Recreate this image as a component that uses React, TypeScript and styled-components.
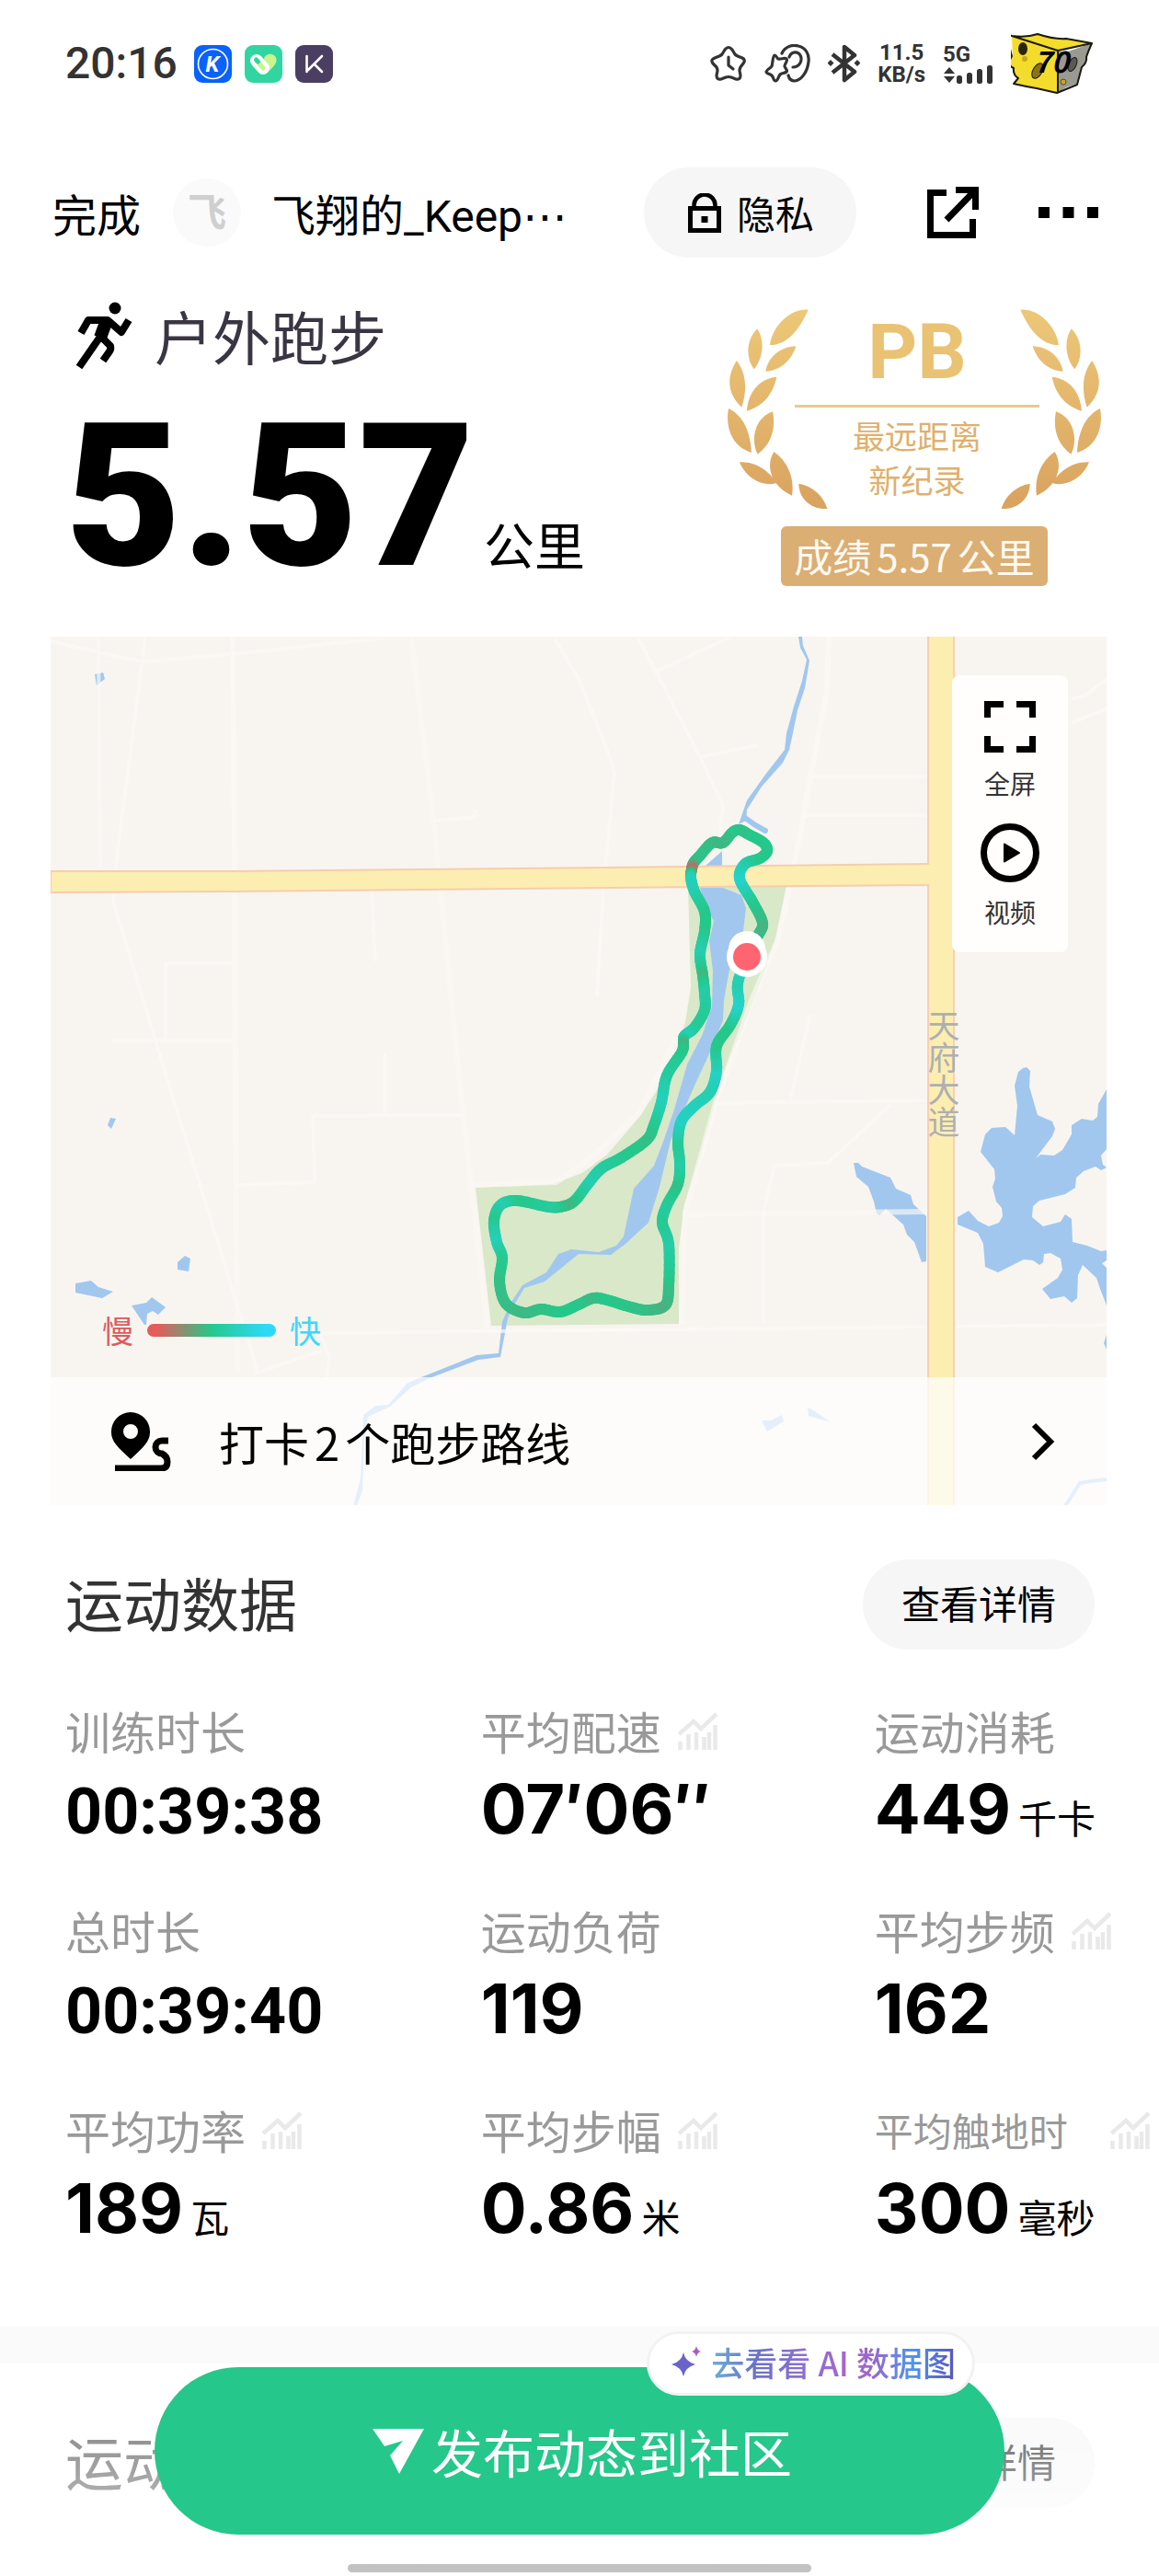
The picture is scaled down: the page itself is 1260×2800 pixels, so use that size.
import React from "react";
import styled, { createGlobalStyle, css } from "styled-components";

const CJK = `"Noto Sans CJK SC", sans-serif`;
const NUM = `Inter, "Noto Sans CJK SC", sans-serif`;
const MIXED = `Roboto, "Noto Sans CJK SC", sans-serif`;

const GlobalStyle = createGlobalStyle`
  *, *::before, *::after { box-sizing: border-box; }
  body { margin: 0; background: #fff; color: #000; font-family: ${CJK}; }
  h1, h2, p, dl, dt, dd { margin: 0; font-weight: 400; }
  button { font-family: inherit; border: 0; padding: 0; background: none; color: inherit; cursor: pointer; }
  svg { display: block; flex: none; }
`;

const Page = styled.div`
  min-height: 100vh;
  display: flex;
  flex-direction: column;
`;

/* ---------- status bar ---------- */

const StatusBar = styled.div`
  height: 138px;
  padding: 0 71px;
  display: flex;
  align-items: center;
  justify-content: space-between;
  color: #333;
`;

const StatusGroup = styled.div<{ $gap: number }>`
  display: flex;
  align-items: center;
  gap: ${(p) => p.$gap}px;
`;

const Clock = styled.time`
  font-family: ${MIXED};
  font-size: 48px;
  line-height: 60px;
  font-weight: 500;
  margin-right: 4px;
`;

const TinyStack = styled.div<{ $align: string }>`
  display: flex;
  flex-direction: column;
  align-items: ${(p) => p.$align};
  font-family: ${MIXED};
  font-size: 24px;
  font-weight: 700;
  line-height: 24px;
`;

/* ---------- top navigation ---------- */

const Nav = styled.header`
  height: 186px;
  padding: 0 66px 0 57px;
  display: flex;
  align-items: center;
  font-size: 48px;
  line-height: 64px;
`;

const TextButton = styled.button`
  font-size: 48px;
  line-height: 64px;
`;

const Avatar = styled.span`
  flex: none;
  width: 74px;
  height: 74px;
  margin: 0 33px 0 35px;
  border-radius: 50%;
  background: #fafafa;
  color: #cfcfcf;
  font-size: 42px;
  font-weight: 700;
  line-height: 68px;
  text-align: center;
`;

const UserName = styled.span`
  flex: 1;
  min-width: 0;
  white-space: nowrap;
`;

const LatinName = styled.span`
  font-family: ${MIXED};
  line-height: 1;
`;

const MoreDots = styled.span`
  font-family: "DejaVu Sans", sans-serif;
  line-height: 1;
`;

const Pill = styled.button`
  flex: none;
  height: 98px;
  padding: 0 42px 4px;
  display: flex;
  align-items: center;
  gap: 17px;
  border-radius: 49px;
  background: #f6f6f6;
  font-size: 42px;
  line-height: 60px;
`;

const PrivacyPill = styled(Pill)`
  padding: 0 46px 0 48px;
`;

const IconButton = styled.button<{ $ml: number }>`
  margin-left: ${(p) => p.$ml}px;
`;

/* ---------- hero ---------- */

const Hero = styled.section`
  height: 368px;
  padding: 0 63px 0 71px;
  display: flex;
  justify-content: space-between;
`;

const SportName = styled.h1`
  height: 80px;
  display: flex;
  align-items: center;
  gap: 24px;
  padding-left: 9px;
  font-size: 63px;
  line-height: 80px;
  color: #3a3542;
`;

const Distance = styled.p`
  font-family: ${MIXED};
  font-weight: 900;
  font-size: 218px;
  line-height: 272px;
  white-space: nowrap;
`;

const DistanceUnit = styled.span`
  margin-left: 10px;
  font-family: ${CJK};
  font-weight: 400;
  font-size: 55px;
  line-height: 1;
`;

const Badge = styled.div`
  padding-top: 12px;
  display: flex;
  flex-direction: column;
  align-items: center;
`;

const Wreath = styled.div`
  display: grid;
  justify-items: center;
  & > * { grid-area: 1 / 1; }
`;

const WreathBody = styled.div`
  width: 272px;
  padding-left: 6px;
  display: flex;
  flex-direction: column;
  align-items: stretch;
  text-align: center;
  color: #e0b06c;
  font-size: 35px;
  line-height: 48px;
`;

const RecordMark = styled.strong`
  font-family: Roboto, sans-serif;
  font-weight: 700;
  font-size: 84px;
  line-height: 94px;
  color: #eac273;
`;

const RecordRule = styled.hr`
  width: 100%;
  height: 3px;
  margin: 10px 0 6px;
  border: 0;
  background: #e6cb8c;
`;

const RecordLabel = styled.p`
  height: 65px;
  margin-top: 18px;
  padding: 0 14px;
  border-radius: 6px;
  background: #dbae74;
  color: #fffaf0;
  font-size: 42px;
  line-height: 64px;
`;

const Inset = styled.span`
  margin: 0 6px;
`;

/* ---------- map ---------- */

const MapCard = styled.section`
  position: relative;
  margin: 0 57px 0 55px;
  overflow: hidden;
`;

const MapSvg = styled.svg`
  width: 100%;
  height: 944px;
`;

const RoadName = styled.text`
  writing-mode: vertical-rl;
  font-family: ${CJK};
  font-size: 35px;
  fill: #adb0b2;
`;

const MapTools = styled.div`
  position: absolute;
  top: 42px;
  right: 42px;
  width: 126px;
  padding: 27px 0 24px;
  display: flex;
  flex-direction: column;
  gap: 24px;
  border-radius: 8px;
  background: #fffefc;
`;

const MapTool = styled.button`
  display: flex;
  flex-direction: column;
  align-items: center;
  gap: 12px;
  font-size: 28px;
  line-height: 40px;
  color: #333;
`;

const Legend = styled.div`
  position: absolute;
  left: 56px;
  bottom: 166px;
  display: flex;
  align-items: center;
  gap: 15px;
  font-size: 34px;
  line-height: 48px;
`;

const LegendWord = styled.span<{ $color: string }>`
  color: ${(p) => p.$color};
`;

const LegendBar = styled.span`
  width: 140px;
  height: 14px;
  border-radius: 7px;
  background: linear-gradient(90deg, #e35d5b 8%, #25c88b 50%, #2ed9f7 92%);
`;

const RouteBar = styled.button`
  position: absolute;
  left: 0;
  right: 0;
  bottom: 0;
  height: 139px;
  padding: 0 56px 0 65px;
  display: flex;
  align-items: center;
  background: rgba(255, 255, 255, 0.72);
  font-size: 49px;
  line-height: 64px;
  text-align: left;
`;

const RouteText = styled.span`
  flex: 1;
  margin-left: 52px;
`;

/* ---------- data section ---------- */

const Section = styled.section`
  padding: 59px 70px 74px 71px;
`;

const SectionHead = styled.div`
  display: flex;
  align-items: center;
  justify-content: space-between;
`;

const SectionTitle = styled.h2`
  padding-bottom: 6px;
  font-size: 63px;
  line-height: 84px;
  color: #333;
`;

const Stats = styled.dl`
  margin: 58px -70px 12px 0;
  display: grid;
  grid-template-columns: 38fr 36fr 26fr;
  row-gap: 60px;
`;

const StatLabel = styled.dt<{ $compact?: boolean }>`
  height: 60px;
  display: flex;
  align-items: center;
  gap: 18px;
  font-size: 49px;
  line-height: 60px;
  white-space: nowrap;
  color: #999;
  ${(p) =>
    p.$compact &&
    css`
      font-size: 42px;
      gap: 46px;
    `}
`;

const StatValue = styled.dd`
  height: 84px;
  margin-top: 13px;
  font-family: ${NUM};
  font-weight: 700;
  font-size: 74px;
  line-height: 84px;
  white-space: nowrap;
`;

const LongValue = styled.span`
  font-family: Roboto, sans-serif;
  font-size: 70px;
  line-height: 1;
`;

const Unit = styled.span`
  margin-left: 8px;
  font-family: ${CJK};
  font-weight: 400;
  font-size: 42px;
  line-height: 1;
`;

const Divider = styled.div`
  height: 41px;
  background: #fafafa;
`;

/* ---------- bottom dock ---------- */

const Dock = styled.footer`
  position: fixed;
  left: 0;
  right: 0;
  bottom: 0;
  padding: 0 168px 4px;
  display: flex;
  flex-direction: column;
  align-items: center;
  background: linear-gradient(rgba(255, 255, 255, 0.3), rgba(255, 255, 255, 0.8));
`;

const PublishWrap = styled.div`
  position: relative;
  width: 100%;
`;

const PublishButton = styled.button`
  width: 100%;
  height: 182px;
  padding: 0;
  display: flex;
  align-items: center;
  justify-content: center;
  gap: 8px;
  border-radius: 91px;
  background: #25c78b;
  color: #fff;
  font-size: 56px;
  line-height: 80px;
  padding-left: 6px;
`;

const AiChip = styled.button`
  position: absolute;
  top: -39px;
  right: 32px;
  height: 70px;
  padding: 0 18px 4px 24px;
  display: flex;
  align-items: center;
  gap: 11px;
  border: 3px solid #f2f2f2;
  border-radius: 35px;
  background: #fff;
  font-size: 36px;
  line-height: 48px;
  font-weight: 500;
`;

const AiText = styled.span`
  background: linear-gradient(90deg, #6bb0d6, #6a72c8 18%, #8d6fd0 38%, #a468cc 55%, #9a66cc 66%, #4f95ee 82%, #5a55bd);
  background-clip: text;
  -webkit-background-clip: text;
  color: transparent;
`;

const HomeIndicator = styled.span`
  width: 504px;
  height: 9px;
  margin-top: 32px;
  border-radius: 5px;
  background: #c2c2c2;
`;

/* ---------- icons ---------- */

const AppIconBlue = () => (
  <svg width="41" height="41" viewBox="0 0 41 41">
    <rect width="41" height="41" rx="9" fill="#0a62fb" />
    <circle cx="20.500" cy="20.500" r="16" fill="none" stroke="#fff" strokeWidth="1.600" />
    <text x="20" y="29" fontSize="24" fontWeight="700" fontStyle="italic" fill="#fff" textAnchor="middle" fontFamily="Roboto, sans-serif">K</text>
  </svg>
);

const AppIconHeart = () => (
  <svg width="41" height="41" viewBox="0 0 41 41">
    <rect width="41" height="41" rx="9" fill="#31d5a2" />
    <path d="M21 15c1-5 8-7 12-3 4 5 0 11-9 18z" fill="#c9f58e" />
    <path d="M13 17l7 8" stroke="#fff" strokeWidth="14" strokeLinecap="round" />
    <path d="M13 17l7 8" stroke="#c9f58e" strokeWidth="5" strokeLinecap="round" />
    <path d="M12.500 16l2 2" stroke="#31d5a2" strokeWidth="5" strokeLinecap="round" />
  </svg>
);

const AppIconKeep = () => (
  <svg width="41" height="41" viewBox="0 0 41 41">
    <rect width="41" height="41" rx="9" fill="#4a3f62" />
    <path d="M12.500 12v17M29 12L14 27M21 21l8 8" stroke="#fff" strokeWidth="2.600" fill="none" strokeLinecap="round" />
  </svg>
);

const StarClock = () => (
  <svg width="40" height="40" viewBox="0 0 40 40" fill="none" stroke="#333" strokeWidth="3.200" strokeLinejoin="round" strokeLinecap="round">
    <path d="M16 5q4-5 8 0l3 5q1 1 3 2l5 2q4 2 1 6l-3 4q-1 2-1 4l1 5q0 5-5 4l-5-2q-3-1-6 0l-5 2q-5 1-5-4l1-5q0-2-1-4l-4-4q-3-4 2-6l5-2q2-1 3-2z" />
    <path d="M20 13v9l5 4" />
  </svg>
);

const StarEar = () => (
  <svg width="50" height="42" viewBox="0 0 50 42" fill="none" stroke="#333" strokeWidth="3.200" strokeLinejoin="round" strokeLinecap="round">
    <path d="M19 10C22 3 30 0 37 2c8 2 12 9 11 17-1 10-7 20-15 21-4 0-6-2-7-6" />
    <path d="M27 14c2-6 9-7 12-2 3 6-1 13-8 13" />
    <path d="M11 12c2 0 3 4 4 4 3 1 7-2 9 0s-2 5-2 8c0 2 4 4 2 6s-5 1-7 3-2 7-5 7c-2 0-2-4-4-6s-6-2-6-4c1-3 5-4 6-6s1-12 3-12z" fill="#fff" />
  </svg>
);

const BluetoothIcon = () => (
  <svg width="35" height="42" viewBox="0 0 35 42">
    <path d="M5 11l24 19-11 9V3l11 9L5 31" fill="none" stroke="#333" strokeWidth="4.500" strokeLinejoin="round" />
    <path d="M3 17l3.500 3.500L3 24-.5 20.500zM32 17l3.500 3.500L32 24l-3.500-3.500z" fill="#333" />
  </svg>
);

const SignalBars = () => (
  <svg width="55" height="20" viewBox="0 0 55 20" fill="#333">
    <path d="M7 2l6 7H1zM7 19l6-7H1z" />
    <rect x="15" y="11" width="6" height="9" rx="2.500" />
    <rect x="26" y="8" width="6" height="12" rx="2.500" />
    <rect x="37" y="4" width="6" height="16" rx="2.500" />
    <rect x="48" y="0" width="6" height="20" rx="2.500" />
  </svg>
);

const CheeseBattery = () => (
  <svg width="90" height="66" viewBox="0 0 90 66">
    <path d="M62 20L88 11q-4 10-6 15 1 6-5 11l-5 18-12 4-10 6V20z" fill="#9b9a92" />
    <path d="M1 3q16 2 28-2 18 6 31 5l28 5-37 8v46l-22-5q-12-2-25-5l5-6q-6-4-5-11-8-3-2-14z" fill="#f3dc2c" />
    <path d="M1 3q16 2 28-2 18 6 31 5l28 5q-4 9-6 15 1 6-5 11l-5 19-22 9-22-5q-12-2-25-5l5-6q-6-4-5-11-8-3-2-13-3-10-4-24zM1 3l50 16v46M51 19l37-8" fill="none" stroke="#1b1a12" strokeWidth="2" strokeLinejoin="round" />
    <ellipse cx="13" cy="17" rx="5" ry="7" fill="#2a2410" />
    <circle cx="15" cy="28" r="3" fill="#c7a91a" />
    <ellipse cx="29" cy="41" rx="5" ry="9" fill="#8a7415" stroke="#1b1a12" transform="rotate(30 29 41)" />
    <ellipse cx="67" cy="34" rx="4" ry="8" fill="#5b5a52" stroke="#1b1a12" transform="rotate(25 67 34)" />
    <circle cx="57" cy="53" r="3" fill="#c7a91a" stroke="#5d5010" />
    <text x="44" y="43" fontSize="32" fontWeight="700" fontStyle="italic" fill="#000" textAnchor="middle" fontFamily="Noto Sans CJK SC, sans-serif">70</text>
  </svg>
);

const LockIcon = () => (
  <svg width="36" height="43" viewBox="0 0 36 43" fill="none" stroke="#000">
    <path d="M6.500 17v-4a11.500 11.500 0 0 1 23 0v4" strokeWidth="4.500" />
    <rect x="2.500" y="16.500" width="31" height="24" strokeWidth="5" />
    <rect x="14.500" y="25" width="7" height="7" fill="#000" stroke="none" />
  </svg>
);

const ShareIcon = () => (
  <svg width="56" height="57" viewBox="0 0 56 57" fill="none" stroke="#000" strokeWidth="7">
    <path d="M21 6.500H3.500v46h46V35" />
    <path d="M31 3.500h21.500V25M52 4L21 36" />
  </svg>
);

const MoreIcon = () => (
  <svg width="65" height="12" viewBox="0 0 65 12">
    <path d="M0 0h12v12H0zM26.500 0h12v12h-12zM53 0h12v12H53z" />
  </svg>
);

const RunnerIcon = () => (
  <svg width="64" height="76" viewBox="0 0 64 76" fill="none" stroke="#000" strokeWidth="8" strokeLinejoin="round">
    <circle cx="45" cy="9" r="6.500" fill="#000" stroke="none" />
    <path d="M8 36l8-14h21l15 13 8-13" />
    <path d="M36 22l-7 19" strokeWidth="14" />
    <path d="M31 37L6 73" />
    <path d="M30 40l10 10q1 3-1 6l-7 10" />
  </svg>
);

const LEAVES =
  "M356 80C300 75 240 130 231 195C285 195 325 150 356 80zM190 142C155 175 150 235 179 274C205 245 218 185 190 142zM316 199C265 200 225 235 217 281C260 280 300 250 316 199zM122 246C88 300 92 355 139 398C157 345 155 285 122 246zM253 299C195 305 160 350 156 410C205 395 240 360 253 299zM96 402C85 460 105 525 171 546C168 480 145 425 96 402zM240 412C185 430 165 500 191 551C240 515 250 460 240 412zM244 543C215 590 235 655 303 686C312 630 290 575 244 543zM132 577C150 625 205 660 253 645C225 600 180 575 132 577zM325 647C325 695 365 732 418 729C405 685 370 655 325 647z";

const Laurels = () => (
  <svg width="406" height="218" viewBox="93 78 1218 654">
    <defs>
      <linearGradient id="gold" gradientUnits="userSpaceOnUse" x1="0" y1="78" x2="0" y2="732">
        <stop offset="0" stopColor="#edc878" />
        <stop offset="1" stopColor="#d9a25f" />
      </linearGradient>
    </defs>
    <path d={LEAVES} fill="url(#gold)" />
    <path d={LEAVES} fill="url(#gold)" transform="translate(1404 0) scale(-1 1)" />
  </svg>
);

const FullscreenIcon = () => (
  <svg width="58" height="58" viewBox="0 0 58 58" fill="none" stroke="#000" strokeWidth="7">
    <path d="M4.500 19V4.500H22M36 4.500h17.500V19M53.500 39v14.500H36M22 53.500H4.500V39" />
  </svg>
);

const VideoIcon = () => (
  <svg width="64" height="64" viewBox="0 0 64 64">
    <circle cx="32" cy="32" r="28.500" fill="none" stroke="#000" strokeWidth="7" />
    <path d="M26 22.500l16 9.500-16 9.500z" stroke="#000" strokeWidth="2" strokeLinejoin="round" />
  </svg>
);

const RouteIcon = () => (
  <svg width="66" height="64" viewBox="0 0 66 64">
    <path d="M22 0a21 21 0 0 1 21 22c0 10-8 17-21 29C9 39 1 32 1 22A21 21 0 0 1 22 0zm0 13a8 8 0 1 0 0 16 8 8 0 0 0 0-16z" />
    <path d="M63 31h-7a7 7 0 0 0 0 14q6 3 6 9 0 7-7 7H5" fill="none" stroke="#000" strokeWidth="7" />
  </svg>
);

const Chevron = () => (
  <svg width="26" height="42" viewBox="0 0 26 42">
    <path d="M3 3l18 18L3 39" fill="none" stroke="#000" strokeWidth="6" />
  </svg>
);

const TrendIcon = () => (
  <svg width="43" height="42" viewBox="0 0 43 42" fill="none" stroke="#e9e9e9" strokeWidth="4.500">
    <path d="M1 25L17 11l8 8L42 3" />
    <path d="M2.500 42V33M11.500 42V25M20 42V23M28.500 42V28M34 42V23M40.500 42V15" />
  </svg>
);

const SendIcon = () => (
  <svg width="56" height="49" viewBox="0 0 56 49">
    <path d="M0 0h56L29 49 19 29l14-16-20 6z" fill="#fff" />
  </svg>
);

const Sparkle = () => (
  <svg width="32" height="34" viewBox="0 0 32 34">
    <path d="M13 7q2 10 13 13-11 3-13 13-2-10-13-13Q11 17 13 7z" fill="#6c63c9" />
    <path d="M27 0q1 5 5 6-4 1-5 6-1-5-5-6 4-1 5-6z" fill="#a45fc4" />
  </svg>
);

/* ---------- map drawing ---------- */

const WATER = "#a1c7ef";

const MINOR_ROADS = [
  "M55 697L133 715 157 719 253 711 420 693",
  "M107 692L109 945",
  "M158 692L125 947 123 980 184 1180 280 1490",
  "M404 968L408 1045",
  "M470 892L517 888V880",
  "M602 692L630 740 660 815 668 840 656 966 649 1082",
  "M693 692L713 730 761 823 786 876 782 908",
  "M713 730L795 692M761 823L823 810",
  "M881 844H1008M873 886H1008",
  "M778 1199L1008 1196M881 1103L859 1196",
  "M968 1201L900 1264 842 1267 830 1317V1440",
  "M350 1449L1203 1440",
  "M255 1047H180V1130M121 1131H255",
  "M502 1212L340 1213 342 1285 258 1288M418 1145V1211",
  "M348 1450L358 1475 355 1500M277 1493L350 1468",
  "M1165 760L1180 756 1203 738M1165 786L1203 770",
];

const MAIN_ROADS = [
  "M253 692L255 945 258 1490",
  "M447 692L470 880 500 1180 530 1445",
  "M901 692L899 751 883 834 873 891 861 951 845 1023 818 1085 778 1199 745 1317 741 1440",
  "M738 1122L695 1210 640 1260 605 1285 512 1288",
  "M745 1320L1008 1317",
];

const PONDS = [
  "103,733 112,731 114,738 105,745",
  "120,1215 126,1216 121,1227 117,1223",
  "201,1365 207,1368 205,1382 193,1380 193,1372",
  "82,1395 99,1392 107,1399 123,1404 111,1411 82,1405",
  "143,1419 159,1416 165,1410 180,1421 172,1429 166,1425 160,1428 159,1440 157,1440",
  "767,941 785,941 785,925",
  "928,1264 933,1264 937,1268 968,1280 974,1292 990,1299 993,1309 1007,1322 1007,1371 1002,1372 994,1350 986,1342 982,1331 963,1314 956,1321 953,1319 950,1306 944,1290 931,1279",
  "1112,1161 1116,1160 1120,1164 1119,1181 1128,1212 1144,1219 1147,1227 1144,1235 1126,1259 1131,1255 1146,1256 1155,1250 1165,1233 1165,1223 1176,1216 1188,1218 1193,1214 1194,1200 1203,1184 1203,1249 1197,1256 1199,1266 1203,1269 1197,1272 1191,1268 1178,1273 1170,1280 1169,1291 1158,1298 1130,1305 1123,1311 1122,1323 1134,1333 1153,1328 1158,1320 1165,1325 1166,1350 1182,1354 1197,1360 1203,1359 1203,1370 1198,1373 1203,1378 1203,1419 1196,1401 1192,1389 1177,1375 1172,1386 1171,1411 1165,1416 1157,1409 1142,1412 1133,1401 1150,1389 1155,1380 1153,1368 1142,1362 1135,1363 1134,1372 1130,1375 1123,1370 1113,1369 1085,1383 1071,1377 1069,1352 1063,1340 1041,1331 1041,1323 1053,1316 1063,1327 1075,1333 1086,1329 1090,1322 1089,1313 1083,1306 1079,1290 1082,1281 1081,1271 1066,1252 1071,1233 1078,1226 1093,1225 1103,1234 1106,1202 1103,1180 1107,1165",
  "1203,1451 1200,1460 1203,1467",
  "828,1544 838,1544 850,1538 852,1545 834,1556",
  "878,1530 883,1532 903,1546 879,1539",
];

const PARK =
  "748,964 855,962 844,1019 830,1059 814,1101 786,1169 759,1264 744,1310 738,1356 738,1439 534,1441 517,1291 601,1287 633,1275 660,1255 695,1214 713,1187 735,1149 745,1111 751,1073";

const PARK_RIVER =
  "761,964 786,965 806,973 811,987 808,1012 794,1048 787,1087 786,1109 770,1148 755,1180 729,1240 717,1290 705,1329 680,1352 664,1364 629,1363 592,1393 570,1400 558,1420 552,1433 544,1475 520,1478 467,1498 447,1508 424,1529 400,1540 396,1563 394,1620 388,1637 384,1637 392,1607 395,1538 408,1528 422,1527 443,1503 518,1473 542,1471 546,1437 554,1418 568,1397 594,1383 607,1363 621,1358 651,1361 670,1354 678,1344 689,1292 711,1267 721,1241 733,1206 747,1157 763,1126 774,1094 775,1055 771,1023 776,1001 766,984";

// x, y, pace (0 slow, 0.5 medium, 1 fast)
const TRACK: [number, number, number][] = [
  [812, 1040, 0.8], [824, 1017, 0.45], [829, 1003, 0.42], [818, 980, 0.5], [804, 955, 0.85],
  [810, 939, 0.7], [826, 933, 0.5], [834, 925, 0.5], [830, 916, 0.5], [814, 907, 0.5],
  [804, 902, 0.46], [796, 905, 0.5], [786, 916, 0.44], [774, 916, 0.44], [761, 930, 0.48],
  [754, 938, 0.45], [752, 945, 0.1], [751, 954, 0.75], [755, 969, 0.7], [766, 991, 0.5], [766, 1012, 0.5],
  [761, 1037, 0.7], [764, 1060, 0.42], [766, 1080, 0.65], [766, 1098, 0.6], [755, 1117, 0.55], [744, 1126, 0.75],
  [743, 1134, 0.4], [741, 1144, 0.5], [725, 1169, 0.6], [719, 1198, 0.75], [711, 1223, 0.55],
  [703, 1239, 0.46], [676, 1258, 0.52], [654, 1270, 0.6], [639, 1287, 0.7], [625, 1305, 0.5],
  [613, 1311, 0.42], [597, 1312, 0.6], [562, 1305, 0.5], [544, 1310, 0.7], [537, 1327, 0.52],
  [540, 1350, 0.75], [546, 1367, 0.55], [543, 1393, 0.46], [550, 1417, 0.46], [570, 1427, 0.44],
  [588, 1423, 0.46], [609, 1426, 0.5], [629, 1418, 0.5], [645, 1411, 0.44], [660, 1413, 0.5],
  [683, 1420, 0.48], [703, 1424, 0.46], [723, 1419, 0.4], [727, 1398, 0.46], [727, 1352, 0.65],
  [720, 1329, 0.55], [725, 1310, 0.6], [737, 1287, 0.46], [739, 1264, 0.65], [737, 1241, 0.55],
  [741, 1218, 0.8], [755, 1202, 0.75], [772, 1187, 0.7], [779, 1164, 0.8], [779, 1137, 0.5],
  [794, 1114, 0.5], [803, 1092, 0.85], [802, 1069, 0.7], [812, 1040, 0.85],
];

const SLOW = [227, 85, 91];
const MEDIUM = [37, 200, 139];
const FAST = [36, 216, 235];

const paceColor = (v: number) => {
  const [a, b, t] = v < 0.5 ? [SLOW, MEDIUM, v * 2] : [MEDIUM, FAST, v * 2 - 1];
  return `rgb(${a.map((c, i) => Math.round(c + (b[i] - c) * t)).join(",")})`;
};

const spline = (p0: number, p1: number, p2: number, p3: number, t: number) =>
  0.5 * (2 * p1 + (p2 - p0) * t + (2 * p0 - 5 * p1 + 4 * p2 - p3) * t * t + (3 * p1 - p0 - 3 * p2 + p3) * t * t * t);

const STEPS = 6;
const trackPoints = TRACK.slice(0, -1).flatMap((p, i) => {
  const before = TRACK[Math.max(0, i - 1)];
  const next = TRACK[i + 1];
  const after = TRACK[Math.min(TRACK.length - 1, i + 2)];
  return Array.from({ length: STEPS }, (_, k) => {
    const t = k / STEPS;
    return {
      x: spline(before[0], p[0], next[0], after[0], t),
      y: spline(before[1], p[1], next[1], after[1], t),
      pace: p[2] + (next[2] - p[2]) * t,
    };
  });
});

const RouteMap = () => (
  <MapSvg viewBox="55 692 1148 944" preserveAspectRatio="xMidYMid slice" role="img" aria-label="跑步轨迹">
    <rect x="-500" y="692" width="2400" height="944" fill="#f8f5f0" />
    <polygon points={PARK} fill="#d9e8c9" />
    <g fill={WATER}>
      {PONDS.map((points) => (
        <polygon key={points} points={points} />
      ))}
      <polygon points={PARK_RIVER} />
      <polygon points="868,692 872,692 873,702 880,718 875,748 867,772 862,797 858,815 851,829 828,855 812,880 811,892 803,896 812,870 832,842 853,815 855,797 863,768 872,740 877,717 870,704" />
    </g>
    <path d="M810 889q10 8 22 14" stroke={WATER} strokeWidth="6" fill="none" strokeLinecap="round" />
    <path d="M1158 1637L1174 1612 1185 1610 1203 1608" stroke={WATER} strokeWidth="4" fill="none" />
    <g fill="none" stroke="#fcf9f6" strokeLinejoin="round">
      <g strokeWidth="4" opacity="0.7">
        {MINOR_ROADS.map((d) => (
          <path key={d} d={d} />
        ))}
      </g>
      <g strokeWidth="6" opacity="0.65">
        {MAIN_ROADS.map((d) => (
          <path key={d} d={d} />
        ))}
      </g>
    </g>
    <path d="M55 947H250L660 943 1009 939V962L660 965 250 969 55 970z" fill="#fceeb0" stroke="#f6cdae" strokeWidth="2" />
    <path d="M1009 690V1640H1037V690z" fill="#fceeb0" stroke="#f9cdb4" strokeWidth="2" />
    <path d="M1000 940L1012 940V961L1000 961z" fill="#fceeb0" />
    <g strokeWidth="12" strokeLinecap="round">
      {trackPoints.slice(0, -1).map((p, i) => (
        <line key={i} x1={p.x} y1={p.y} x2={trackPoints[i + 1].x} y2={trackPoints[i + 1].y} stroke={paceColor(p.pace)} />
      ))}
    </g>
    <circle cx="812" cy="1032" r="20" fill="#fff" />
    <circle cx="812" cy="1040" r="22" fill="#fff" />
    <circle cx="812" cy="1040" r="15" fill="#ff6570" />
    <RoadName x="1026" y="1097">天府大道</RoadName>
  </MapSvg>
);

/* ---------- content ---------- */

type Stat = { label: string; value: string; unit?: string; trend?: boolean; long?: boolean; compact?: boolean };

const STATS: Stat[] = [
  { label: "训练时长", value: "00:39:38", long: true },
  { label: "平均配速", value: "07′06″", trend: true },
  { label: "运动消耗", value: "449", unit: "千卡" },
  { label: "总时长", value: "00:39:40", long: true },
  { label: "运动负荷", value: "119" },
  { label: "平均步频", value: "162", trend: true },
  { label: "平均功率", value: "189", unit: "瓦", trend: true },
  { label: "平均步幅", value: "0.86", unit: "米", trend: true },
  { label: "平均触地时", value: "300", unit: "毫秒", trend: true, compact: true },
];

export default function App() {
  return (
    <Page>
      <GlobalStyle />
      <StatusBar>
        <StatusGroup $gap={14}>
          <Clock>20:16</Clock>
          <AppIconBlue />
          <AppIconHeart />
          <AppIconKeep />
        </StatusGroup>
        <StatusGroup $gap={19}>
          <StarClock />
          <StarEar />
          <BluetoothIcon />
          <TinyStack $align="center">
            <span>11.5</span>
            <span>KB/s</span>
          </TinyStack>
          <TinyStack $align="flex-start">
            <span>5G</span>
            <SignalBars />
          </TinyStack>
          <CheeseBattery />
        </StatusGroup>
      </StatusBar>

      <Nav>
        <TextButton>完成</TextButton>
        <Avatar>飞</Avatar>
        <UserName>
          飞翔的<LatinName>_Keep</LatinName>
          <MoreDots>⋯</MoreDots>
        </UserName>
        <PrivacyPill>
          <LockIcon />
          隐私
        </PrivacyPill>
        <IconButton $ml={77} aria-label="分享">
          <ShareIcon />
        </IconButton>
        <IconButton $ml={65} aria-label="更多">
          <MoreIcon />
        </IconButton>
      </Nav>

      <Hero>
        <div>
          <SportName>
            <RunnerIcon />
            户外跑步
          </SportName>
          <Distance>
            5.57<DistanceUnit>公里</DistanceUnit>
          </Distance>
        </div>
        <Badge>
          <Wreath>
            <Laurels />
            <WreathBody>
              <RecordMark>PB</RecordMark>
              <RecordRule />
              <span>最远距离</span>
              <span>新纪录</span>
            </WreathBody>
          </Wreath>
          <RecordLabel>
            成绩<Inset>5.57</Inset>公里
          </RecordLabel>
        </Badge>
      </Hero>

      <MapCard>
        <RouteMap />
        <MapTools>
          <MapTool>
            <FullscreenIcon />
            全屏
          </MapTool>
          <MapTool>
            <VideoIcon />
            视频
          </MapTool>
        </MapTools>
        <Legend>
          <LegendWord $color="#dc5a5e">慢</LegendWord>
          <LegendBar />
          <LegendWord $color="#3cd8f6">快</LegendWord>
        </Legend>
        <RouteBar>
          <RouteIcon />
          <RouteText>
            打卡<Inset>2</Inset>个跑步路线
          </RouteText>
          <Chevron />
        </RouteBar>
      </MapCard>

      <Section>
        <SectionHead>
          <SectionTitle>运动数据</SectionTitle>
          <Pill>查看详情</Pill>
        </SectionHead>
        <Stats>
          {STATS.map((s) => (
            <div key={s.label}>
              <StatLabel $compact={s.compact}>
                {s.label}
                {s.trend && <TrendIcon />}
              </StatLabel>
              <StatValue>
                {s.long ? <LongValue>{s.value}</LongValue> : s.value}
                {s.unit && <Unit>{s.unit}</Unit>}
              </StatValue>
            </div>
          ))}
        </Stats>
      </Section>

      <Divider />

      <Section>
        <SectionHead>
          <SectionTitle>运动路线</SectionTitle>
          <Pill>查看详情</Pill>
        </SectionHead>
      </Section>

      <Dock>
        <PublishWrap>
          <PublishButton>
            <SendIcon />
            发布动态到社区
          </PublishButton>
          <AiChip>
            <Sparkle />
            <AiText>去看看 AI 数据图</AiText>
          </AiChip>
        </PublishWrap>
        <HomeIndicator />
      </Dock>
    </Page>
  );
}
